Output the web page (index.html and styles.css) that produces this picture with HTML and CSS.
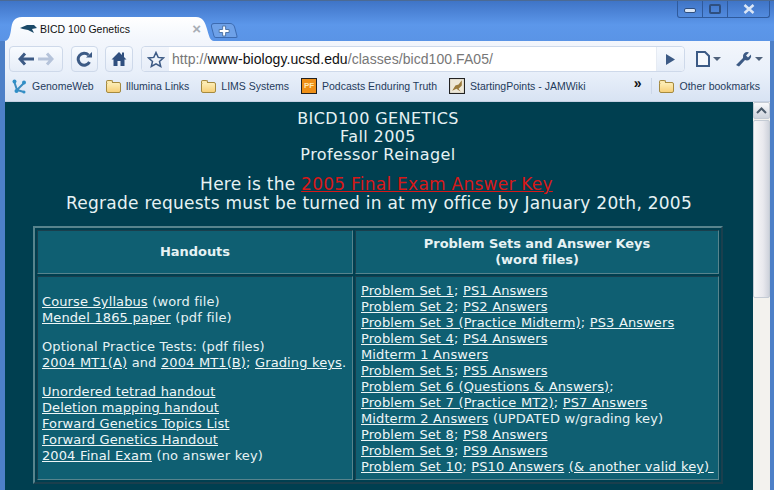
FILE: index.html
```html
<!DOCTYPE html>
<html lang="en">
<head>
<meta charset="utf-8">
<title>BICD 100 Genetics</title>
<link rel="stylesheet" href="styles.css">
</head>
<body>
<div class="window">
  <div class="titlebar">
    <div class="tab">
      <svg class="favicon" width="18" height="10" viewBox="0 0 18 10"><path d="M0 4 L7 1 L14 1 L17 4 L12 5 L14 9 L8 6 L3 5 Z" fill="#1c4a68"/></svg>
      <span class="tab-title">BICD 100 Genetics</span>
      <span class="tab-close">×</span>
    </div>
    <div class="newtab"><svg width="12" height="12" viewBox="0 0 12 12"><path d="M4.500 1h3v3.500h3.500v3h-3.500v3.500h-3v-3.500h-3.500v-3h3.500z" fill="#fff" stroke="#4f76a8"/></svg></div>
    <div class="winbtns">
      <span class="winbtn min"><svg width="12" height="6" viewBox="0 0 12 6"><rect x="0.500" y="0.500" width="11" height="4" rx="1.500" fill="#dbe6f6" stroke="#2f4f7f"/></svg></span>
      <span class="winbtn max"><svg width="12" height="10" viewBox="0 0 12 10"><rect x="1" y="1" width="10" height="8" rx="1" fill="none" stroke="#2f4f7f" stroke-width="2"/></svg></span>
      <span class="winbtn close"><svg width="12" height="10" viewBox="0 0 12 10"><path d="M1.500 1 L10.500 9 M10.500 1 L1.500 9" stroke="#dbe6f6" stroke-width="2.500"/></svg></span>
    </div>
  </div>
  <div class="toolbar">
    <div class="btn back">
      <svg width="18" height="14" viewBox="0 0 18 14"><path d="M7 1.500 L2 7 L7 12.500 M3 7 H16" fill="none" stroke="#3c5a85" stroke-width="3"/></svg>
      <svg width="18" height="14" viewBox="0 0 18 14"><path d="M11 1.500 L16 7 L11 12.500 M15 7 H2" fill="none" stroke="#b5c3da" stroke-width="3"/></svg>
    </div>
    <div class="btn square">
      <svg width="17" height="16" viewBox="0 0 17 16"><path d="M13.500 11 A6 6 0 1 1 12.500 4" fill="none" stroke="#3c5a85" stroke-width="3"/><path d="M10 6.500 H16 V1 Z" fill="#3c5a85"/></svg>
    </div>
    <div class="btn square">
      <svg width="16" height="16" viewBox="0 0 16 16"><path d="M8 1 L11 4 V1.500 H13 V6 L15.500 8.500 H13.500 V15 H9.500 V10 H6.500 V15 H2.500 V8.500 H0.500 Z" fill="#2f4f7f"/></svg>
    </div>
    <div class="omnibox">
      <div class="star"><svg width="18" height="17" viewBox="0 0 18 17"><path d="M9 1.500 L11.200 6.400 L16.500 6.900 L12.500 10.400 L13.700 15.500 L9 12.800 L4.300 15.500 L5.500 10.400 L1.500 6.900 L6.800 6.400 Z" fill="#eef3fa" stroke="#3c5a85" stroke-width="1.500"/></svg></div>
      <div class="url"><span class="dim">http://</span><span class="host">www-biology.ucsd.edu</span><span class="dim">/classes/bicd100.FA05/</span></div>
      <div class="go"><svg width="11" height="13" viewBox="0 0 11 13"><path d="M1 1 L10 6.500 L1 12 Z" fill="#3c5a85"/></svg></div>
    </div>
    <div class="menus">
      <span class="menu"><svg width="14" height="16" viewBox="0 0 14 16"><path d="M1 1 H9 L13 5 V15 H1 Z" fill="#f5f8fd" stroke="#3c5a85" stroke-width="2"/></svg><i class="caret"></i></span>
      <span class="menu"><svg width="17" height="16" viewBox="0 0 17 16"><path d="M1 14 L8 7 A4.500 4.500 0 0 1 14 1.500 L11 4.500 L13 6.500 L16 3.500 A4.500 4.500 0 0 1 10 9 L4 15.500 Z" fill="#3c5a85"/></svg><i class="caret"></i></span>
    </div>
  </div>
  <div class="bookmarks">
    <span class="bm"><svg class="icon" width="15" height="15" viewBox="0 0 15 15"><path d="M2 2 L5 11 L12 4 M5 11 L12 13" fill="none" stroke="#3b8cc0" stroke-width="2"/><circle cx="2.500" cy="2.500" r="2" fill="#2f8fc7"/><circle cx="12" cy="3.500" r="2" fill="#2f8fc7"/><circle cx="4.500" cy="12" r="2" fill="#2f8fc7"/><circle cx="12" cy="13" r="1.500" fill="#2f8fc7"/></svg>GenomeWeb</span>
    <span class="bm"><i class="folder"></i>Illumina Links</span>
    <span class="bm"><i class="folder"></i>LIMS Systems</span>
    <span class="bm"><i class="pf">PF</i>Podcasts Enduring Truth</span>
    <span class="bm"><svg class="icon" width="16" height="16" viewBox="0 0 15 15"><rect x="0.500" y="0.500" width="14" height="14" fill="#eee8d8" stroke="#222"/><path d="M3 12 L6 7 L9 6 L12 2 L12 7 L9 10 L11 13 L7 10 Z" fill="#9a7a3c"/></svg>StartingPoints - JAMWiki</span>
    <span class="chev">»</span>
    <span class="bm other"><i class="folder"></i>Other bookmarks</span>
  </div>
  <div class="viewport">
    <main class="page">
      <div class="heading">BICD100 GENETICS<br>Fall 2005<br>Professor Reinagel</div>
      <div class="notice">Here is the <a class="alert" href="#">2005 Final Exam Answer Key</a><br>Regrade requests must be turned in at my office by January 20th, 2005</div>
      <table class="grid">
        <tr class="head">
          <th class="col-left">Handouts</th>
          <th class="col-right">Problem Sets and Answer Keys<br>(word files)</th>
        </tr>
        <tr>
          <td class="handouts">
            <p class="group"><a href="#">Course Syllabus</a> (word file)<br>
            <a href="#">Mendel 1865 paper</a> (pdf file)</p>
            <p class="group">Optional Practice Tests: (pdf files)<br>
            <a href="#">2004 MT1(A)</a> and <a href="#">2004 MT1(B)</a>; <a href="#">Grading keys</a>.</p>
            <p class="group"><a href="#">Unordered tetrad handout</a><br>
            <a href="#">Deletion mapping handout</a><br>
            <a href="#">Forward Genetics Topics List</a><br>
            <a href="#">Forward Genetics Handout</a><br>
            <a href="#">2004 Final Exam</a> (no answer key)</p>
          </td>
          <td class="sets">
            <a href="#">Problem Set 1</a>; <a href="#">PS1 Answers</a><br>
            <a href="#">Problem Set 2</a>; <a href="#">PS2 Answers</a><br>
            <a href="#">Problem Set 3 (Practice Midterm)</a>; <a href="#">PS3 Answers</a><br>
            <a href="#">Problem Set 4</a>; <a href="#">PS4 Answers</a><br>
            <a href="#">Midterm 1 Answers</a><br>
            <a href="#">Problem Set 5</a>; <a href="#">PS5 Answers</a><br>
            <a href="#">Problem Set 6 (Questions &amp; Answers)</a>;<br>
            <a href="#">Problem Set 7 (Practice MT2)</a>; <a href="#">PS7 Answers</a><br>
            <a href="#">Midterm 2 Answers</a> (UPDATED w/grading key)<br>
            <a href="#">Problem Set 8</a>; <a href="#">PS8 Answers</a><br>
            <a href="#">Problem Set 9</a>; <a href="#">PS9 Answers</a><br>
            <a href="#">Problem Set 10</a>; <a href="#">PS10 Answers</a> <a href="#">(&amp; another valid key)&nbsp;</a>
          </td>
        </tr>
      </table>
    </main>
    <div class="scrollbar">
      <div class="arrow"><svg width="11" height="7" viewBox="0 0 11 7"><path d="M1 6 L5.500 1.500 L10 6" fill="none" stroke="#4a5a6a" stroke-width="2"/></svg></div>
      <div class="thumb"></div>
    </div>
  </div>
</div>
</body>
</html>
```
FILE: styles.css
```css
html, body { margin: 0; padding: 0; }
body { width: 774px; height: 490px; overflow: hidden; font-family: "DejaVu Sans", sans-serif; }
.window { width: 774px; height: 490px; box-sizing: border-box; padding: 0 4px 0 5px; display: flex; flex-direction: column; overflow: hidden; background: #4d80c8; border-top: 1px solid #4b6a94; }

.titlebar { height: 40px; flex: none; box-sizing: border-box; display: flex; align-items: flex-end; margin: 0 -4px 0 -5px; padding-left: 4px; background: linear-gradient(#3f74c6, #5c97ea 60%, #5a94e6); position: relative; }
.tab { width: 210px; height: 24px; box-sizing: border-box; display: flex; align-items: center; padding: 0 13px 0 16px; background: linear-gradient(#fff, #f2f6fc); clip-path: path("M0 24 C5 24 6 19 7 13 C8 5 10 0 18 0 H192 C199 0 201 5 203 12 C205 19 206 24 210 24 Z"); font: 10.500px "Liberation Sans", Arial, sans-serif; color: #111; }
.favicon { margin-right: 2px; flex: none; }
.tab-title { flex: 1; white-space: nowrap; }
.tab-close { color: #a7adb5; font-size: 15px; line-height: 12px; font-weight: bold; }
.newtab { width: 24px; height: 15px; margin: 0 0 3px -2px; background: #6ea1e8; border: 1px solid #3d6bb0; border-radius: 4px 4px 2px 2px; display: flex; align-items: center; justify-content: center; box-sizing: border-box; transform: skewX(15deg); }
.newtab svg { transform: skewX(-15deg); }
.winbtns { position: absolute; top: 0; right: 4px; height: 16px; display: flex; border: 1px solid #2f5a9c; border-top: none; border-radius: 0 0 3px 3px; }
.winbtn { height: 16px; display: flex; align-items: center; justify-content: center; box-sizing: border-box; }
.min { width: 25px; border-right: 1px solid #2f5a9c; padding-top: 4px; }
.max { width: 25px; border-right: 1px solid #2f5a9c; }
.close { width: 41px; }

.toolbar { height: 31px; flex: none; box-sizing: border-box; display: flex; align-items: flex-start; padding: 5px 0 0 4px; background: linear-gradient(#f3f6fc, #e9f0fa); }
.btn { height: 26px; box-sizing: border-box; border: 1px solid #ced9ea; border-radius: 4px; display: flex; align-items: center; justify-content: center; background: linear-gradient(#f8fbff, #e6edf8); }
.back { width: 54px; margin-right: 8px; }
.square { width: 27px; margin-right: 7px; }
.btn.square + .btn.square { width: 28px; margin-right: 8px; }
.omnibox { width: 544px; height: 26px; box-sizing: border-box; display: flex; align-items: stretch; border: 1px solid #ced9ea; border-radius: 4px; background: #fff; }
.star { width: 27px; display: flex; align-items: center; justify-content: center; background: linear-gradient(#f3f6fc, #e6edf8); border-radius: 4px 0 0 4px; flex: none; }
.url { flex: 1; font: 14px/24px "Liberation Sans", Arial, sans-serif; letter-spacing: 0.060px; padding-left: 3px; white-space: nowrap; }
.dim { color: #777; }
.host { color: #111; }
.go { width: 27px; flex: none; display: flex; align-items: center; justify-content: center; border-left: 1px solid #e6ebf3; background: linear-gradient(#f6f9fe, #e6edf8); border-radius: 0 4px 4px 0; }
.menus { display: flex; flex: 1; justify-content: flex-start; height: 26px; align-items: center; padding-left: 11px; gap: 14px; }
.menu { display: flex; align-items: center; gap: 3px; }
.caret { width: 0; height: 0; border: 4px solid transparent; border-top: 4px solid #50627c; border-bottom: none; }

.bookmarks { height: 30px; flex: none; box-sizing: border-box; display: flex; align-items: center; padding: 0 10px 1px 7px; background: linear-gradient(#e9f0fa, #d8e3f3); border-bottom: 1px solid #c4d0e2; font: 10.500px/14px "Liberation Sans", Arial, sans-serif; color: #1f3b5c; white-space: nowrap; }
.bm { display: inline-flex; align-items: center; gap: 5px; margin-right: 12px; }
.folder { display: inline-block; width: 15px; height: 11px; box-sizing: border-box; border: 1px solid #a58a3f; border-radius: 2px; background: linear-gradient(#fdeeb6, #f6cf78); position: relative; margin-top: 2px; }
.folder::before { content: ""; position: absolute; left: -1px; top: -3px; width: 7px; height: 3px; border: 1px solid #a58a3f; border-bottom: none; border-radius: 2px 2px 0 0; box-sizing: border-box; background: #fbe9ae; }
.pf { display: inline-block; width: 16px; height: 16px; box-sizing: border-box; border: 1px solid #222; background: #ee8f17; color: #ffe8b0; font: bold 8px/13px "Liberation Sans", sans-serif; text-align: center; }
.icon { flex: none; }
.chev { margin: -6px 0 0 auto; font-size: 14px; line-height: 14px; color: #111; font-weight: bold; }
.other { margin: 0 0 0 10px; padding-left: 7px; border-left: 1px solid #ccd7e8; height: 16px; }

.viewport { flex: 1; display: flex; min-height: 0; background: #003f50; }
.page { flex: 1; min-width: 0; box-sizing: border-box; padding-top: 8px; background: #003f50; color: #e6f2f4; text-align: center; overflow: hidden; }
.heading { font-size: 16px; line-height: 18px; letter-spacing: 0.400px; margin-left: -2px; }
.notice { font-size: 17px; line-height: 19px; letter-spacing: 0.250px; margin-top: 11px; }
.alert { color: #d81818; margin-right: 5px; }
a { color: #eef6f7; }

.grid { width: 690px; margin: 13px 0 0 28px; border-collapse: separate; border-spacing: 2px; border: 2px solid #57848d; border-right-color: #1a3f4d; border-bottom-color: #1a3f4d; background: #003f50; font-size: 13px; line-height: 16px; letter-spacing: 0.100px; word-spacing: 0.300px; color: #e6f2f4; table-layout: fixed; }
.grid td, .grid th { background: #0f5f72; border-bottom: 1px solid #57848d; border-right: 1px solid #57848d; border-top: 1px solid #1a3f4d; border-left: 1px solid #1a3f4d; }
.head th { height: 42px; padding: 0; letter-spacing: -0.050px; word-spacing: 0; }
.col-left { width: 314px; }
.handouts { padding: 17px 4px 0 4px; text-align: left; white-space: nowrap; }
.grid td.handouts { vertical-align: top; }
.group { margin: 0 0 13px; }
.sets { padding: 6px 4px 4px 5px; text-align: left; white-space: nowrap; }

.scrollbar { width: 17px; flex: none; background: #f3f2ee; display: flex; flex-direction: column; }
.arrow { height: 17px; box-sizing: border-box; background: linear-gradient(#f8f9fb, #cdd3dc); border: 1px solid #c4cbd4; border-radius: 2px; display: flex; align-items: center; justify-content: center; }
.thumb { height: 178px; box-sizing: border-box; background: linear-gradient(90deg, #f7f7f7, #e9e9ee 60%, #cfd3dc); border: 1px solid #c4cbd4; border-radius: 2px; margin-top: 1px; }
```
